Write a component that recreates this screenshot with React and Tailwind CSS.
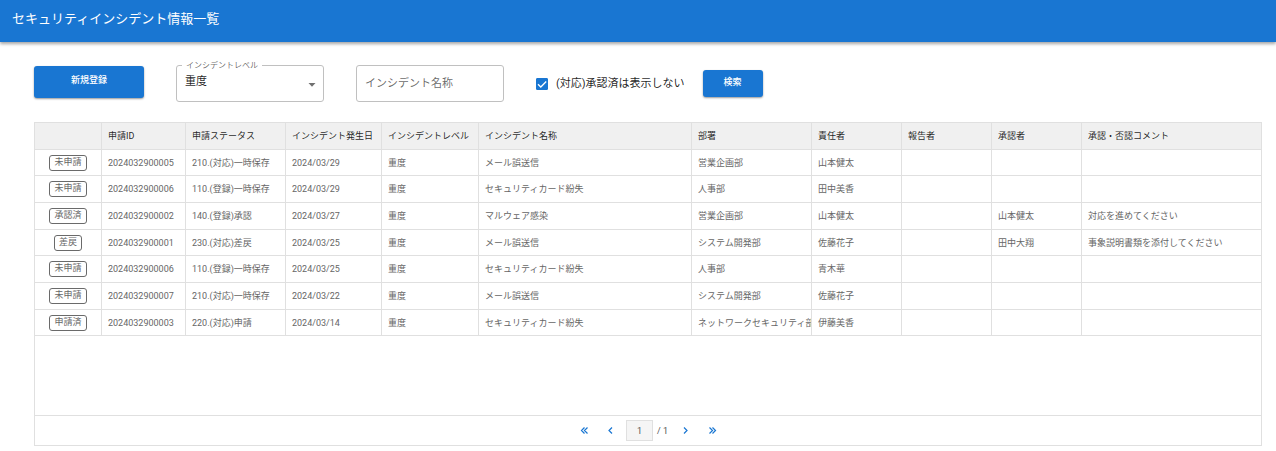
import { useState } from 'react';

const columns = [
  { key: 'badge', label: '', width: 'w-[67px]' },
  { key: 'id', label: '申請ID', width: 'w-[84px]' },
  { key: 'status', label: '申請ステータス', width: 'w-[100px]' },
  { key: 'date', label: 'インシデント発生日', width: 'w-24' },
  { key: 'level', label: 'インシデントレベル', width: 'w-[97px]' },
  { key: 'name', label: 'インシデント名称', width: 'w-[213px]' },
  { key: 'dept', label: '部署', width: 'w-[120px]' },
  { key: 'owner', label: '責任者', width: 'w-[90px]' },
  { key: 'reporter', label: '報告者', width: 'w-[90px]' },
  { key: 'approver', label: '承認者', width: 'w-[90px]' },
  { key: 'comment', label: '承認・否認コメント', width: 'w-auto' },
];

const incidents = [
  { badge: '未申請', id: '2024032900005', status: '210.(対応)一時保存', date: '2024/03/29', level: '重度', name: 'メール誤送信', dept: '営業企画部', owner: '山本健太' },
  { badge: '未申請', id: '2024032900006', status: '110.(登録)一時保存', date: '2024/03/29', level: '重度', name: 'セキュリティカード紛失', dept: '人事部', owner: '田中美香' },
  { badge: '承認済', id: '2024032900002', status: '140.(登録)承認', date: '2024/03/27', level: '重度', name: 'マルウェア感染', dept: '営業企画部', owner: '山本健太', approver: '山本健太', comment: '対応を進めてください' },
  { badge: '差戻', id: '2024032900001', status: '230.(対応)差戻', date: '2024/03/25', level: '重度', name: 'メール誤送信', dept: 'システム開発部', owner: '佐藤花子', approver: '田中大翔', comment: '事象説明書類を添付してください' },
  { badge: '未申請', id: '2024032900006', status: '110.(登録)一時保存', date: '2024/03/25', level: '重度', name: 'セキュリティカード紛失', dept: '人事部', owner: '青木華' },
  { badge: '未申請', id: '2024032900007', status: '210.(対応)一時保存', date: '2024/03/22', level: '重度', name: 'メール誤送信', dept: 'システム開発部', owner: '佐藤花子' },
  { badge: '申請済', id: '2024032900003', status: '220.(対応)申請', date: '2024/03/14', level: '重度', name: 'セキュリティカード紛失', dept: 'ネットワークセキュリティ部', owner: '伊藤美香' },
];

export default function App() {
  return (
    <div lang="ja" className="bg-white font-['Roboto','Noto_Sans_CJK_JP',sans-serif] text-black/87">
      <header className="flex h-[42px] items-center bg-[#1976d2] px-3 pb-1 text-white shadow-[0_2px_3px_rgba(0,0,0,0.35)]">
        <h1 className="text-[13px] leading-5">セキュリティインシデント情報一覧</h1>
      </header>

      <main className="pt-[23px] pr-3.5 pb-1 pl-[34px]">
        <SearchForm />
        <IncidentGrid />
      </main>
    </div>
  );
}

function SearchForm() {
  const [level, setLevel] = useState('重度');
  const [name, setName] = useState('');
  const [hideApproved, setHideApproved] = useState(true);

  return (
    <form className="flex items-center" onSubmit={(e) => e.preventDefault()}>
      <PrimaryButton className="mb-1 h-8 w-[110px]">新規登録</PrimaryButton>

      <div className="relative ml-8 w-[148px]">
        <label
          htmlFor="level"
          className="absolute -top-[3px] left-1.5 bg-white px-1 text-[8px] leading-2 text-black/60"
        >
          インシデントレベル
        </label>
        <select
          id="level"
          value={level}
          onChange={(e) => setLevel(e.target.value)}
          className="block h-[37px] w-full appearance-none rounded-[3px] border border-[#c0c0c0] bg-transparent px-2 pb-0.5 text-[11px] text-black/87"
        >
          <option>重度</option>
          <option>中度</option>
          <option>軽度</option>
        </select>
        <svg viewBox="0 0 8 4" className="pointer-events-none absolute top-[18px] right-2 h-1 w-2 fill-[#707070]">
          <path d="M.5 0h7L4 3.8Z" />
        </svg>
      </div>

      <input
        type="text"
        aria-label="インシデント名称"
        placeholder="インシデント名称"
        value={name}
        onChange={(e) => setName(e.target.value)}
        className="ml-8 h-[37px] w-[148px] rounded-[3px] border border-[#c0c0c0] px-2 text-[11px] placeholder:text-black/60"
      />

      <label className="ml-8 flex items-center gap-2 text-[11px] leading-4">
        <span className="relative block size-3">
          <input
            type="checkbox"
            checked={hideApproved}
            onChange={(e) => setHideApproved(e.target.checked)}
            className="peer block size-3 appearance-none rounded-[1px] border border-[#1976d2] checked:bg-[#1976d2]"
          />
          <svg
            viewBox="0 0 12 12"
            className="pointer-events-none absolute inset-0 hidden size-3 peer-checked:block"
            fill="none"
            stroke="#fff"
            strokeWidth="1.3"
          >
            <path d="M2 6.2 4.8 9 10.2 3.5" />
          </svg>
        </span>
        (対応)承認済は表示しない
      </label>

      <PrimaryButton className="ml-[18px] h-[27px] w-[60px]">検索</PrimaryButton>
    </form>
  );
}

function PrimaryButton({ className, children }) {
  return (
    <button
      type="button"
      className={`flex items-center justify-center rounded-[3px] bg-[#1976d2] pb-1 text-[9px] leading-3 font-medium text-white shadow-[0_1px_2px_rgba(0,0,0,0.4)] ${className}`}
    >
      {children}
    </button>
  );
}

function IncidentGrid() {
  return (
    <section className="mt-5 border border-[#e0e0e0] text-[9px] leading-3">
      <div className="min-h-[292px] overflow-x-auto">
        <table className="w-full table-fixed border-separate border-spacing-0">
          <thead>
            <tr className="h-[27px] bg-[#f0f0f0]">
              {columns.map((col) => (
                <th
                  key={col.key}
                  scope="col"
                  className={`${col.width} overflow-hidden border-r border-b border-[#e0e0e0] px-1.5 py-0 text-left font-normal whitespace-nowrap text-black/87 last:border-r-0`}
                >
                  {col.label}
                </th>
              ))}
            </tr>
          </thead>
          <tbody>
            {incidents.map((row, i) => (
              <tr key={i} className="h-[27px] nth-[3n+1]:h-[26px]">
                {columns.map((col) => (
                  <td
                    key={col.key}
                    className="overflow-hidden border-r border-b border-[#e0e0e0] px-1.5 py-0 whitespace-nowrap text-[#666] first:text-center last:border-r-0"
                  >
                    {col.key === 'badge' ? <Badge>{row.badge}</Badge> : row[col.key]}
                  </td>
                ))}
              </tr>
            ))}
          </tbody>
        </table>
      </div>
      <Pager />
    </section>
  );
}

function Badge({ children }) {
  return (
    <span className="inline-block h-4 rounded-[3px] border border-[#6a6a6a] px-1 align-middle leading-3">
      {children}
    </span>
  );
}

function Pager() {
  return (
    <nav className="flex h-[30px] items-center justify-center border-t border-[#e0e0e0] text-[#555]">
      <PagerButton label="最初" d="M5.5 1.5 2.5 4.5l3 3M8.5 1.5l-3 3 3 3" />
      <PagerButton label="前へ" d="M6 1.5 3 4.5l3 3" />
      <input
        type="text"
        aria-label="ページ"
        defaultValue="1"
        className="ml-0.5 h-[21px] w-[27px] border border-[#e0e0e0] bg-[#f5f5f5] text-center"
      />
      <span className="mr-1 ml-1">/ 1</span>
      <PagerButton label="次へ" d="m3 1.5 3 3-3 3" />
      <PagerButton label="最後" d="m1.5 1.5 3 3-3 3M4.5 1.5l3 3-3 3" />
    </nav>
  );
}

function PagerButton({ label, d }) {
  return (
    <button type="button" aria-label={label} className="flex h-6 w-[27px] items-center justify-center text-[#1976d2]">
      <svg viewBox="0 0 9 9" className="size-[9px]" fill="none" stroke="currentColor" strokeWidth="1.2">
        <path d={d} />
      </svg>
    </button>
  );
}
